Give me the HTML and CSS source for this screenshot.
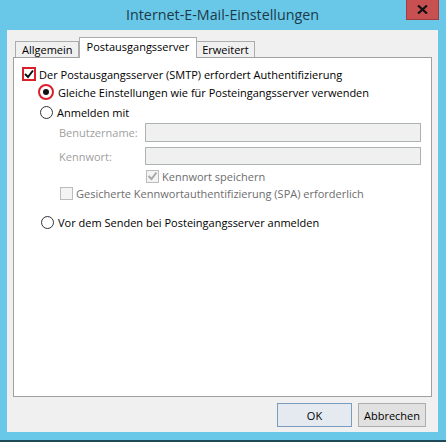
FILE: index.html
```html
<!DOCTYPE html>
<html lang="de">
<head>
    <meta charset="UTF-8">
    <meta name="viewport" content="width=device-width, initial-scale=1.0">
    <title>Internet-E-Mail-Einstellungen</title>
    <link rel="stylesheet" href="styles.css">
</head>
<body>
    <div class="window">
        <div class="titlebar">
            <span class="title">Internet-E-Mail-Einstellungen</span>
            <span class="close">
                <svg width="11" height="9" viewBox="0 0 11 9">
                    <path d="M1 0.5 L10 8.5 M10 0.5 L1 8.5" stroke="#111" stroke-width="2.2" fill="none"/>
                </svg>
            </span>
        </div>
        <div class="client">
            <div class="tabs">
                <div class="tab">Allgemein</div>
                <div class="tab active">Postausgangsserver</div>
                <div class="tab">Erweitert</div>
            </div>
            <div class="panel">
                <div class="row row-auth">
                    <span class="check marked">
                        <svg width="10" height="10" viewBox="0 0 10 10">
                            <path d="M1 5 L4 8 L9 1.5" stroke="#111" stroke-width="2" fill="none"/>
                        </svg>
                    </span>
                    <span class="label">Der Postausgangsserver (SMTP) erfordert Authentifizierung</span>
                </div>
                <div class="row row-same">
                    <span class="radio marked"><span class="dot"></span></span>
                    <span class="label">Gleiche Einstellungen wie für Posteingangsserver verwenden</span>
                </div>
                <div class="row row-login">
                    <span class="radio"></span>
                    <span class="label">Anmelden mit</span>
                </div>
                <div class="row row-field row-user">
                    <span class="field-label">Benutzername:</span>
                    <span class="field"></span>
                </div>
                <div class="row row-field row-pass">
                    <span class="field-label">Kennwort:</span>
                    <span class="field"></span>
                </div>
                <div class="row row-save">
                    <span class="check disabled">
                        <svg width="11" height="10" viewBox="0 0 11 10">
                            <path d="M1.5 5 L4.5 8 L9.5 1.5" stroke="#a8a8a8" stroke-width="2" fill="none"/>
                        </svg>
                    </span>
                    <span class="label muted">Kennwort speichern</span>
                </div>
                <div class="row row-spa">
                    <span class="check disabled"></span>
                    <span class="label muted">Gesicherte Kennwortauthentifizierung (SPA) erforderlich</span>
                </div>
                <div class="row row-before">
                    <span class="radio"></span>
                    <span class="label">Vor dem Senden bei Posteingangsserver anmelden</span>
                </div>
            </div>
            <div class="buttons">
                <button class="btn default">OK</button>
                <button class="btn">Abbrechen</button>
            </div>
        </div>
    </div>
</body>
</html>
```

FILE: styles.css
```css
html, body {
    margin: 0;
    padding: 0;
}

body {
    font-family: "Open Sans", "Noto Sans", sans-serif;
    font-size: 11px;
    color: #000;
    background-color: #69c8e8;
}

.window {
    position: relative;
    width: 446px;
    height: 442px;
    box-sizing: border-box;
    background-color: #69c8e8;
    border-bottom: 2px solid #1d4b5a;
    padding: 0 8px 0 7px;
}

.titlebar {
    height: 30px;
    display: flex;
    align-items: center;
    justify-content: center;
}

.title {
    font-size: 14.3px;
    color: #1c3a4a;
    margin-top: -1px;
}

.close {
    position: absolute;
    top: 0;
    right: 7px;
    width: 33px;
    height: 20px;
    background-color: #c75050;
    border: 1px solid #a33c3c;
    border-top: none;
    box-sizing: border-box;
    display: flex;
    align-items: center;
    justify-content: center;
}

.client {
    height: 402px;
    background-color: #f0f0f0;
    display: flex;
    flex-direction: column;
}

.tabs {
    display: flex;
    align-items: flex-end;
    height: 27px;
    padding-left: 8px;
    position: relative;
    z-index: 1;
}

.tab {
    height: 16px;
    line-height: 15px;
    padding: 0 5px 0 6px;
    border: 1px solid #acacac;
    border-bottom: none;
    background-color: #f0f0f0;
    box-sizing: border-box;
}

.tab + .tab {
    border-left: none;
}

.tab.active {
    height: 21px;
    line-height: 17px;
    background-color: #fff;
    padding: 0 7px;
    margin-bottom: -1px;
    border-left: 1px solid #acacac;
    border-right: 1px solid #acacac;
}

.tab.active + .tab {
    border-left: none;
    padding: 0 5px;
}

.panel {
    margin: 0 6px;
    height: 340px;
    box-sizing: border-box;
    background-color: #fff;
    border: 1px solid #a0a0a0;
    padding: 7px 0 0 8px;
}

.row {
    display: flex;
    align-items: center;
    height: 18px;
}

.row-same {
    padding-left: 16px;
}

.row-login {
    margin-top: 2px;
    padding-left: 18px;
}

.row-field {
    padding-left: 37px;
    height: 19px;
}

.row-user {
    margin-top: 2px;
}

.row-pass {
    margin-top: 5px;
    height: 18px;
}

.row-save {
    margin-top: 3px;
    height: 16px;
    padding-left: 124px;
}

.row-spa {
    margin-top: 1px;
    height: 16px;
    padding-left: 38px;
}

.row-before {
    margin-top: 13px;
    height: 16px;
    padding-left: 19px;
}

.label {
    margin-left: 3px;
    white-space: nowrap;
}

.label.muted {
    color: #6d6d6d;
}

.field-label {
    width: 86px;
    color: #a0a0a0;
}

.field {
    width: 276px;
    height: 100%;
    box-sizing: border-box;
    background-color: #f0f0f0;
    border: 1px solid #adb2b5;
}

.check {
    width: 13px;
    height: 13px;
    box-sizing: border-box;
    border: 1px solid #333;
    background-color: #fff;
    display: flex;
    align-items: center;
    justify-content: center;
}

.check.marked {
    width: 14px;
    height: 14px;
    border: 2px solid #d9202c;
}

.check.disabled {
    border-color: #bcbcbc;
    background-color: #f4f4f4;
}

.radio {
    width: 13px;
    height: 13px;
    box-sizing: border-box;
    border: 1px solid #333;
    border-radius: 50%;
    background-color: #fff;
    display: flex;
    align-items: center;
    justify-content: center;
}

.radio.marked {
    width: 16px;
    height: 16px;
    border: 2px solid #d9202c;
}

.radio .dot {
    width: 6px;
    height: 6px;
    border-radius: 50%;
    background-color: #111;
}

.row-same .label,
.row-login .label,
.row-before .label {
    margin-left: 4px;
}

.buttons {
    display: flex;
    justify-content: flex-end;
    gap: 6px;
    padding: 6px 12px 0 0;
}

.btn {
    font-family: inherit;
    font-size: 11px;
    height: 24px;
    padding: 0;
    background-color: #e1e1e1;
    border: 1px solid #adadad;
    color: #000;
}

.btn.default {
    width: 75px;
    background-color: #e5eaf0;
    border: 1px solid #7a9cc0;
}

.btn + .btn {
    width: 68px;
}
```
